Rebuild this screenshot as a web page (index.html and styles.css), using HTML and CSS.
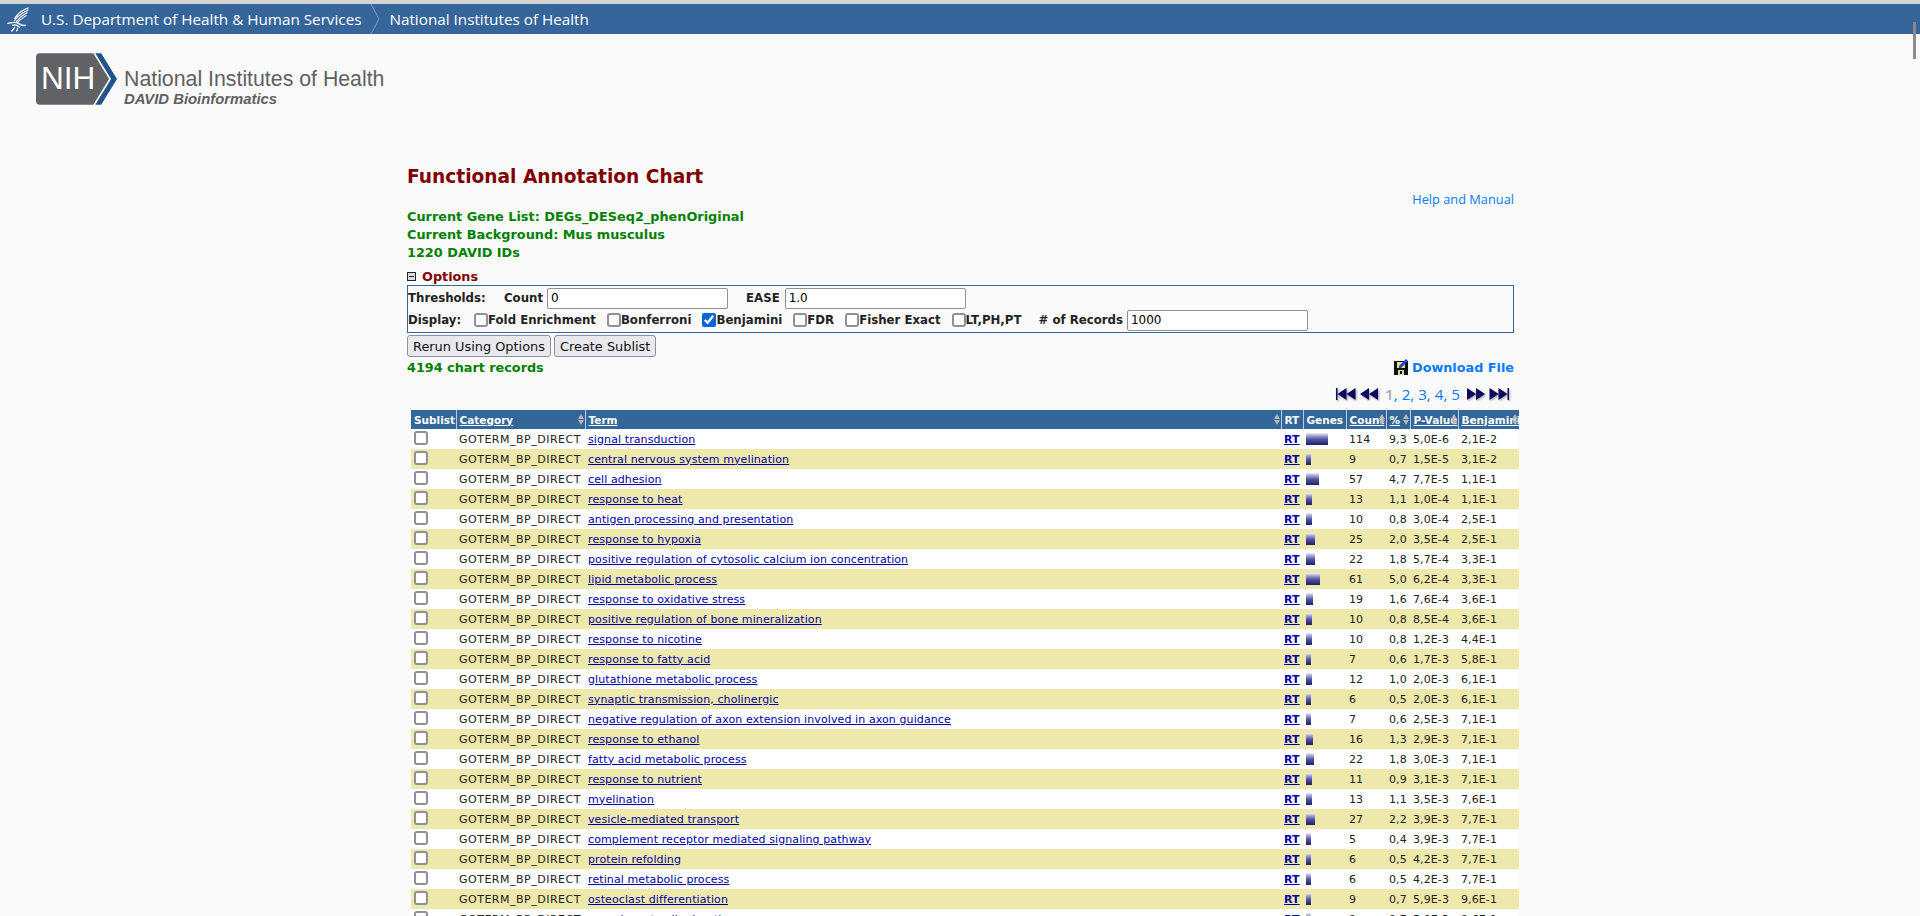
FILE: index.html
```html
<!DOCTYPE html>
<html lang="en">
<head>
    <meta charset="UTF-8">
    <title>DAVID Functional Annotation Chart</title>
    <link rel="stylesheet" href="styles.css">
</head>
<body>
    <div class="scroll-thumb"></div>
    <div class="hhs-bar">
        <svg class="hhs-eagle" viewBox="0 0 24 26" fill="none" stroke="#fff" stroke-linecap="round">
            <path d="M8 12C11 7 16 3 22 1" stroke-width="1.3"/>
            <path d="M8 14C11 9 16 6 22 3" stroke-width="1.2"/>
            <path d="M10 15C13 11 17 8 21 6" stroke-width="1.2"/>
            <path d="M11 16C14 13 17 11 20 9" stroke-width="1.1"/>
            <path d="M1 17C5 16 9 15 12 17C15 19 16 20 19 19" stroke-width="1.5"/>
            <path d="M6 19C9 18 11 19 13 21" stroke-width="1.4"/>
            <path d="M8 21C7 23 6 24 5 25" stroke-width="1.3"/>
            <path d="M11 22C11 23 11 24 10 25" stroke-width="1.2"/>
        </svg>
        <span class="hhs-link">U.S. Department of Health &amp; Human Services</span>
        <svg class="hhs-sep" viewBox="0 0 10 30" fill="none" stroke="#7b9cc4"><path d="M1 0L9 15L1 30"/></svg>
        <span class="hhs-link">National Institutes of Health</span>
    </div>

    <div class="brand">
        <svg class="nih-logo" viewBox="0 0 82 52">
            <path d="M4 0H58L74 26L58 52H4Q0 52 0 48V4Q0 0 4 0Z" fill="#616265"/>
            <path d="M60 0H66L82 26L66 52H60L76 26Z" fill="#20558a"/>
            <text x="5" y="36" class="nih-letters">NIH</text>
        </svg>
        <div class="brand-text">
            <div class="brand-name">National Institutes of Health</div>
            <div class="brand-sub">DAVID Bioinformatics</div>
        </div>
    </div>

    <div class="main">
        <h1 class="page-title">Functional Annotation Chart</h1>
        <div class="help-row"><a class="help-link">Help and Manual</a></div>
        <div class="list-info">
            <div>Current Gene List: DEGs_DESeq2_phenOriginal</div>
            <div>Current Background: Mus musculus</div>
            <div>1220 DAVID IDs</div>
        </div>

        <div class="options-head"><span class="collapse-box"></span>Options</div>
        <div class="options-box">
            <div class="opt-row">
                <b class="opt-label">Thresholds:</b>
                <b class="count-label">Count</b>
                <input class="opt-input" type="text" value="0">
                <b class="ease-label">EASE</b>
                <input class="opt-input" type="text" value="1.0">
            </div>
            <div class="opt-row">
                <b class="opt-label display-label">Display:</b>
                <label class="opt-check"><input type="checkbox">Fold Enrichment</label>
                <label class="opt-check"><input type="checkbox">Bonferroni</label>
                <label class="opt-check"><input type="checkbox" checked>Benjamini</label>
                <label class="opt-check"><input type="checkbox">FDR</label>
                <label class="opt-check"><input type="checkbox">Fisher Exact</label>
                <label class="opt-check"><input type="checkbox">LT,PH,PT</label>
                <b class="records-label"># of Records</b>
                <input class="opt-input" type="text" value="1000">
            </div>
        </div>
        <div class="btn-row">
            <button class="opt-btn">Rerun Using Options</button>
            <button class="opt-btn">Create Sublist</button>
        </div>

        <div class="records-row">
            <span class="records-count">4194 chart records</span>
            <a class="download">
                <svg class="floppy" viewBox="0 0 14 16">
                    <path d="M0 2H14V16H0Z" fill="#111"/>
                    <path d="M3 3H11V9H3Z" fill="#e8e080"/>
                    <path d="M4 11H10V16H4Z" fill="#d8d8a0"/>
                    <path d="M6 12H8V15H6Z" fill="#111"/>
                    <path d="M5 7L12 0L14 2L7 9H5Z" fill="#1c3fe0"/>
                </svg>Download File
            </a>
        </div>

        <div class="pager">
            <svg class="pager-arrows" viewBox="0 0 43 14">
                <path d="M0 1H1.500V13H0ZM10.500 1V13L1.500 7ZM19.500 1V13L10.500 7Z" fill="#0a0a60"/>
                <path d="M33 1V13L24 7ZM42 1V13L33 7Z" fill="#0a0a60"/>
            </svg>
            <span class="pager-nums"><b>1</b>, 2, 3, 4, 5</span>
            <svg class="pager-arrows" viewBox="0 0 43 14">
                <path d="M1 1V13L10 7ZM10 1V13L19 7Z" fill="#0a0a60"/>
                <path d="M23.500 1V13L32.500 7ZM32.500 1V13L41.500 7ZM41.500 1H43V13H41.500Z" fill="#0a0a60"/>
            </svg>
        </div>

        <table class="chart">
            <colgroup>
                <col class="c-sub"><col class="c-cat"><col class="c-term"><col class="c-rt">
                <col class="c-genes"><col class="c-count"><col class="c-pct"><col class="c-p"><col class="c-ben">
            </colgroup>
            <thead>
                <tr>
                    <th>Sublist</th>
                    <th class="sortable"><u>Category</u></th>
                    <th class="sortable"><u>Term</u></th>
                    <th class="th-center">RT</th>
                    <th>Genes</th>
                    <th class="sortable"><u>Count</u></th>
                    <th class="sortable"><u>%</u></th>
                    <th class="sortable"><u>P-Value</u></th>
                    <th class="sortable"><u>Benjamini</u></th>
                </tr>
            </thead>
            <tbody>
                <tr><td><input type="checkbox"></td><td class="cat">GOTERM_BP_DIRECT</td><td><a>signal transduction</a></td><td><a class="rt">RT</a></td><td><span class="bar" style="width:22px"></span></td><td>114</td><td>9,3</td><td>5,0E-6</td><td>2,1E-2</td></tr>
                <tr><td><input type="checkbox"></td><td class="cat">GOTERM_BP_DIRECT</td><td><a>central nervous system myelination</a></td><td><a class="rt">RT</a></td><td><span class="bar" style="width:5px"></span></td><td>9</td><td>0,7</td><td>1,5E-5</td><td>3,1E-2</td></tr>
                <tr><td><input type="checkbox"></td><td class="cat">GOTERM_BP_DIRECT</td><td><a>cell adhesion</a></td><td><a class="rt">RT</a></td><td><span class="bar" style="width:13px"></span></td><td>57</td><td>4,7</td><td>7,7E-5</td><td>1,1E-1</td></tr>
                <tr><td><input type="checkbox"></td><td class="cat">GOTERM_BP_DIRECT</td><td><a>response to heat</a></td><td><a class="rt">RT</a></td><td><span class="bar" style="width:6px"></span></td><td>13</td><td>1,1</td><td>1,0E-4</td><td>1,1E-1</td></tr>
                <tr><td><input type="checkbox"></td><td class="cat">GOTERM_BP_DIRECT</td><td><a>antigen processing and presentation</a></td><td><a class="rt">RT</a></td><td><span class="bar" style="width:6px"></span></td><td>10</td><td>0,8</td><td>3,0E-4</td><td>2,5E-1</td></tr>
                <tr><td><input type="checkbox"></td><td class="cat">GOTERM_BP_DIRECT</td><td><a>response to hypoxia</a></td><td><a class="rt">RT</a></td><td><span class="bar" style="width:9px"></span></td><td>25</td><td>2,0</td><td>3,5E-4</td><td>2,5E-1</td></tr>
                <tr><td><input type="checkbox"></td><td class="cat">GOTERM_BP_DIRECT</td><td><a>positive regulation of cytosolic calcium ion concentration</a></td><td><a class="rt">RT</a></td><td><span class="bar" style="width:9px"></span></td><td>22</td><td>1,8</td><td>5,7E-4</td><td>3,3E-1</td></tr>
                <tr><td><input type="checkbox"></td><td class="cat">GOTERM_BP_DIRECT</td><td><a>lipid metabolic process</a></td><td><a class="rt">RT</a></td><td><span class="bar" style="width:14px"></span></td><td>61</td><td>5,0</td><td>6,2E-4</td><td>3,3E-1</td></tr>
                <tr><td><input type="checkbox"></td><td class="cat">GOTERM_BP_DIRECT</td><td><a>response to oxidative stress</a></td><td><a class="rt">RT</a></td><td><span class="bar" style="width:7px"></span></td><td>19</td><td>1,6</td><td>7,6E-4</td><td>3,6E-1</td></tr>
                <tr><td><input type="checkbox"></td><td class="cat">GOTERM_BP_DIRECT</td><td><a>positive regulation of bone mineralization</a></td><td><a class="rt">RT</a></td><td><span class="bar" style="width:6px"></span></td><td>10</td><td>0,8</td><td>8,5E-4</td><td>3,6E-1</td></tr>
                <tr><td><input type="checkbox"></td><td class="cat">GOTERM_BP_DIRECT</td><td><a>response to nicotine</a></td><td><a class="rt">RT</a></td><td><span class="bar" style="width:6px"></span></td><td>10</td><td>0,8</td><td>1,2E-3</td><td>4,4E-1</td></tr>
                <tr><td><input type="checkbox"></td><td class="cat">GOTERM_BP_DIRECT</td><td><a>response to fatty acid</a></td><td><a class="rt">RT</a></td><td><span class="bar" style="width:5px"></span></td><td>7</td><td>0,6</td><td>1,7E-3</td><td>5,8E-1</td></tr>
                <tr><td><input type="checkbox"></td><td class="cat">GOTERM_BP_DIRECT</td><td><a>glutathione metabolic process</a></td><td><a class="rt">RT</a></td><td><span class="bar" style="width:6px"></span></td><td>12</td><td>1,0</td><td>2,0E-3</td><td>6,1E-1</td></tr>
                <tr><td><input type="checkbox"></td><td class="cat">GOTERM_BP_DIRECT</td><td><a>synaptic transmission, cholinergic</a></td><td><a class="rt">RT</a></td><td><span class="bar" style="width:5px"></span></td><td>6</td><td>0,5</td><td>2,0E-3</td><td>6,1E-1</td></tr>
                <tr><td><input type="checkbox"></td><td class="cat">GOTERM_BP_DIRECT</td><td><a>negative regulation of axon extension involved in axon guidance</a></td><td><a class="rt">RT</a></td><td><span class="bar" style="width:5px"></span></td><td>7</td><td>0,6</td><td>2,5E-3</td><td>7,1E-1</td></tr>
                <tr><td><input type="checkbox"></td><td class="cat">GOTERM_BP_DIRECT</td><td><a>response to ethanol</a></td><td><a class="rt">RT</a></td><td><span class="bar" style="width:7px"></span></td><td>16</td><td>1,3</td><td>2,9E-3</td><td>7,1E-1</td></tr>
                <tr><td><input type="checkbox"></td><td class="cat">GOTERM_BP_DIRECT</td><td><a>fatty acid metabolic process</a></td><td><a class="rt">RT</a></td><td><span class="bar" style="width:8px"></span></td><td>22</td><td>1,8</td><td>3,0E-3</td><td>7,1E-1</td></tr>
                <tr><td><input type="checkbox"></td><td class="cat">GOTERM_BP_DIRECT</td><td><a>response to nutrient</a></td><td><a class="rt">RT</a></td><td><span class="bar" style="width:6px"></span></td><td>11</td><td>0,9</td><td>3,1E-3</td><td>7,1E-1</td></tr>
                <tr><td><input type="checkbox"></td><td class="cat">GOTERM_BP_DIRECT</td><td><a>myelination</a></td><td><a class="rt">RT</a></td><td><span class="bar" style="width:6px"></span></td><td>13</td><td>1,1</td><td>3,5E-3</td><td>7,6E-1</td></tr>
                <tr><td><input type="checkbox"></td><td class="cat">GOTERM_BP_DIRECT</td><td><a>vesicle-mediated transport</a></td><td><a class="rt">RT</a></td><td><span class="bar" style="width:9px"></span></td><td>27</td><td>2,2</td><td>3,9E-3</td><td>7,7E-1</td></tr>
                <tr><td><input type="checkbox"></td><td class="cat">GOTERM_BP_DIRECT</td><td><a>complement receptor mediated signaling pathway</a></td><td><a class="rt">RT</a></td><td><span class="bar" style="width:5px"></span></td><td>5</td><td>0,4</td><td>3,9E-3</td><td>7,7E-1</td></tr>
                <tr><td><input type="checkbox"></td><td class="cat">GOTERM_BP_DIRECT</td><td><a>protein refolding</a></td><td><a class="rt">RT</a></td><td><span class="bar" style="width:5px"></span></td><td>6</td><td>0,5</td><td>4,2E-3</td><td>7,7E-1</td></tr>
                <tr><td><input type="checkbox"></td><td class="cat">GOTERM_BP_DIRECT</td><td><a>retinal metabolic process</a></td><td><a class="rt">RT</a></td><td><span class="bar" style="width:5px"></span></td><td>6</td><td>0,5</td><td>4,2E-3</td><td>7,7E-1</td></tr>
                <tr><td><input type="checkbox"></td><td class="cat">GOTERM_BP_DIRECT</td><td><a>osteoclast differentiation</a></td><td><a class="rt">RT</a></td><td><span class="bar" style="width:5px"></span></td><td>9</td><td>0,7</td><td>5,9E-3</td><td>9,6E-1</td></tr>
                <tr><td><input type="checkbox"></td><td class="cat">GOTERM_BP_DIRECT</td><td><a>neural crest cell migration</a></td><td><a class="rt">RT</a></td><td><span class="bar" style="width:5px"></span></td><td>9</td><td>0,7</td><td>5,9E-3</td><td>9,6E-1</td></tr>
            </tbody>
        </table>
    </div>
</body>
</html>
```

FILE: styles.css
```css
html, body {
    height: 916px;
    overflow: hidden;
}
body {
    margin: 0;
    background: #fafafa;
    font-family: "DejaVu Sans", Verdana, sans-serif;
    font-size: 11px;
    color: #222;
}
.scroll-thumb {
    position: absolute;
    top: 22px;
    right: 4px;
    width: 3px;
    height: 37px;
    background: #8b8b8b;
}
.hhs-bar {
    display: flex;
    align-items: center;
    height: 30px;
    margin-top: 4px;
    background: #36659b;
    box-shadow: 0 -4px 0 #d4d4d4;
    color: #fff;
    font-family: "Open Sans", sans-serif;
    font-size: 15.250px;
    padding-left: 7px;
}
.hhs-eagle {
    width: 23px;
    height: 25px;
    margin-right: 11px;
}
.hhs-sep {
    width: 10px;
    height: 30px;
    margin: 0 9px;
}
.brand {
    display: flex;
    align-items: flex-start;
    padding: 19px 0 0 36px;
}
.nih-logo {
    width: 81px;
    height: 52px;
    margin-right: 7px;
}
.nih-letters {
    font-family: "Liberation Sans", sans-serif;
    font-size: 32px;
    fill: #fff;
}
.brand-text {
    padding-top: 14px;
    font-family: "Liberation Sans", sans-serif;
    color: #5f6063;
}
.brand-name {
    font-size: 21.300px;
    line-height: 24px;
}
.brand-sub {
    font-size: 14.850px;
    line-height: 17px;
    font-weight: bold;
    font-style: italic;
}
.main {
    width: 1107px;
    margin-left: 407px;
    padding-top: 57px;
}
.page-title {
    margin: 0;
    font-size: 18.600px;
    line-height: 24px;
    color: #800000;
}
.help-row {
    text-align: right;
    height: 18px;
    line-height: 18px;
    margin-top: 1px;
}
.help-link {
    font-family: "Open Sans", sans-serif;
    font-size: 12.800px;
    color: #0a7bff;
}
.list-info {
    margin-top: 0;
    font-size: 12.850px;
    font-weight: bold;
    line-height: 18px;
    color: #008000;
}
.options-head {
    display: flex;
    align-items: center;
    margin-top: 5px;
    height: 18px;
    font-size: 12.800px;
    font-weight: bold;
    color: #800000;
}
.collapse-box {
    width: 7px;
    height: 7px;
    margin-right: 6px;
    border: 1px solid #222;
    background: linear-gradient(#222, #222) center / 5px 1px no-repeat #ddd;
}
.options-box {
    box-sizing: border-box;
    height: 48px;
    padding: 1px 0;
    border: 1px solid #336699;
}
.opt-row {
    display: flex;
    align-items: center;
    height: 22px;
    font-size: 11.750px;
}
.opt-label {
    width: 96px;
}
.display-label {
    width: 66px;
}
.count-label {
    margin-right: 4px;
}
.ease-label {
    margin: 0 5px 0 18px;
}
.opt-input {
    box-sizing: border-box;
    width: 181px;
    height: 21px;
    padding: 1px 3px;
    border: 1px solid #8f8f9d;
    border-radius: 2px;
    font-family: "DejaVu Sans", sans-serif;
    font-size: 12px;
}
.opt-check {
    display: flex;
    align-items: center;
    margin-right: 11px;
    font-weight: bold;
}
.opt-check input {
    margin: 0;
}
input[type="checkbox"]:not(:checked) {
    appearance: none;
    box-sizing: border-box;
    width: 14px;
    height: 14px;
    border: 2px solid #8f8f9d;
    border-radius: 3px;
    background: #fff;
}
input[type="checkbox"]:checked {
    width: 14px;
    height: 14px;
    accent-color: #0a66d8;
}
.records-label {
    margin: 0 4px 0 6px;
}
.btn-row {
    display: flex;
    gap: 3px;
    margin-top: 2px;
}
.opt-btn {
    height: 22px;
    padding: 0 5px;
    border: 1px solid #8f8f9d;
    border-radius: 3px;
    background: #e9e9ed;
    font-family: "DejaVu Sans", sans-serif;
    font-size: 12.900px;
    color: #111;
}
.records-row {
    display: flex;
    justify-content: space-between;
    align-items: center;
    margin-top: 1px;
    height: 18px;
}
.records-count {
    font-size: 12.800px;
    font-weight: bold;
    color: #008000;
}
.download {
    display: flex;
    align-items: center;
    font-size: 12.800px;
    font-weight: bold;
    color: #0a7bff;
}
.floppy {
    width: 14px;
    height: 16px;
    margin-right: 4px;
}
.pager {
    display: flex;
    justify-content: flex-end;
    align-items: center;
    gap: 6px;
    height: 18px;
    margin: 9px 0 7px;
    padding-right: 5px;
}
.pager-arrows {
    width: 43px;
    height: 14px;
    filter: drop-shadow(1px 1px 1px #999);
}
.pager-nums {
    font-family: "Open Sans", sans-serif;
    font-size: 15.200px;
    color: #0a7bff;
}
.pager-nums b {
    color: #aaa;
    font-weight: 600;
}
.chart {
    width: 1108px;
    margin-left: 4px;
    border-collapse: collapse;
    table-layout: fixed;
}
.c-sub { width: 45px; }
.c-cat { width: 129px; }
.c-term { width: 696px; }
.c-rt { width: 22px; }
.c-genes { width: 43px; }
.c-count { width: 40px; }
.c-pct { width: 24px; }
.c-p { width: 48px; }
.c-ben { width: 61px; }
.chart th {
    height: 19px;
    padding: 0 3px;
    background: #336699;
    border-left: 1px solid #c5c5ea;
    color: #fff;
    font-size: 10.500px;
    font-weight: bold;
    text-align: left;
    white-space: nowrap;
    overflow: hidden;
}
.chart th:first-child {
    border-left: 0;
}
.chart .sortable {
    position: relative;
}
.chart .sortable::before,
.chart .sortable::after {
    content: "";
    position: absolute;
    right: 1px;
    border-left: 3.500px solid transparent;
    border-right: 3.500px solid transparent;
}
.chart .sortable::before {
    top: 4px;
    border-bottom: 5px solid #b8b8b8;
}
.chart .sortable::after {
    top: 10px;
    border-top: 5px solid #b8b8b8;
}
.chart td {
    height: 20px;
    padding: 0 3px;
    font-size: 11px;
    letter-spacing: 0.100px;
    white-space: nowrap;
    overflow: hidden;
}
.chart .cat {
    letter-spacing: 0.500px;
}
.chart tbody tr:nth-child(odd) {
    background: #fff;
}
.chart tbody tr:nth-child(even) {
    background: #eee8aa;
}
.chart td input {
    display: block;
    margin: 0 0 2px 0;
}
.chart a {
    color: #0000aa;
    text-decoration: underline;
}
.chart .rt {
    font-weight: bold;
}
.bar {
    display: block;
    height: 12px;
    background: linear-gradient(#f0f0fa, #9c9cd0 25%, #5050a0 55%, #1f1f66);
}
```
